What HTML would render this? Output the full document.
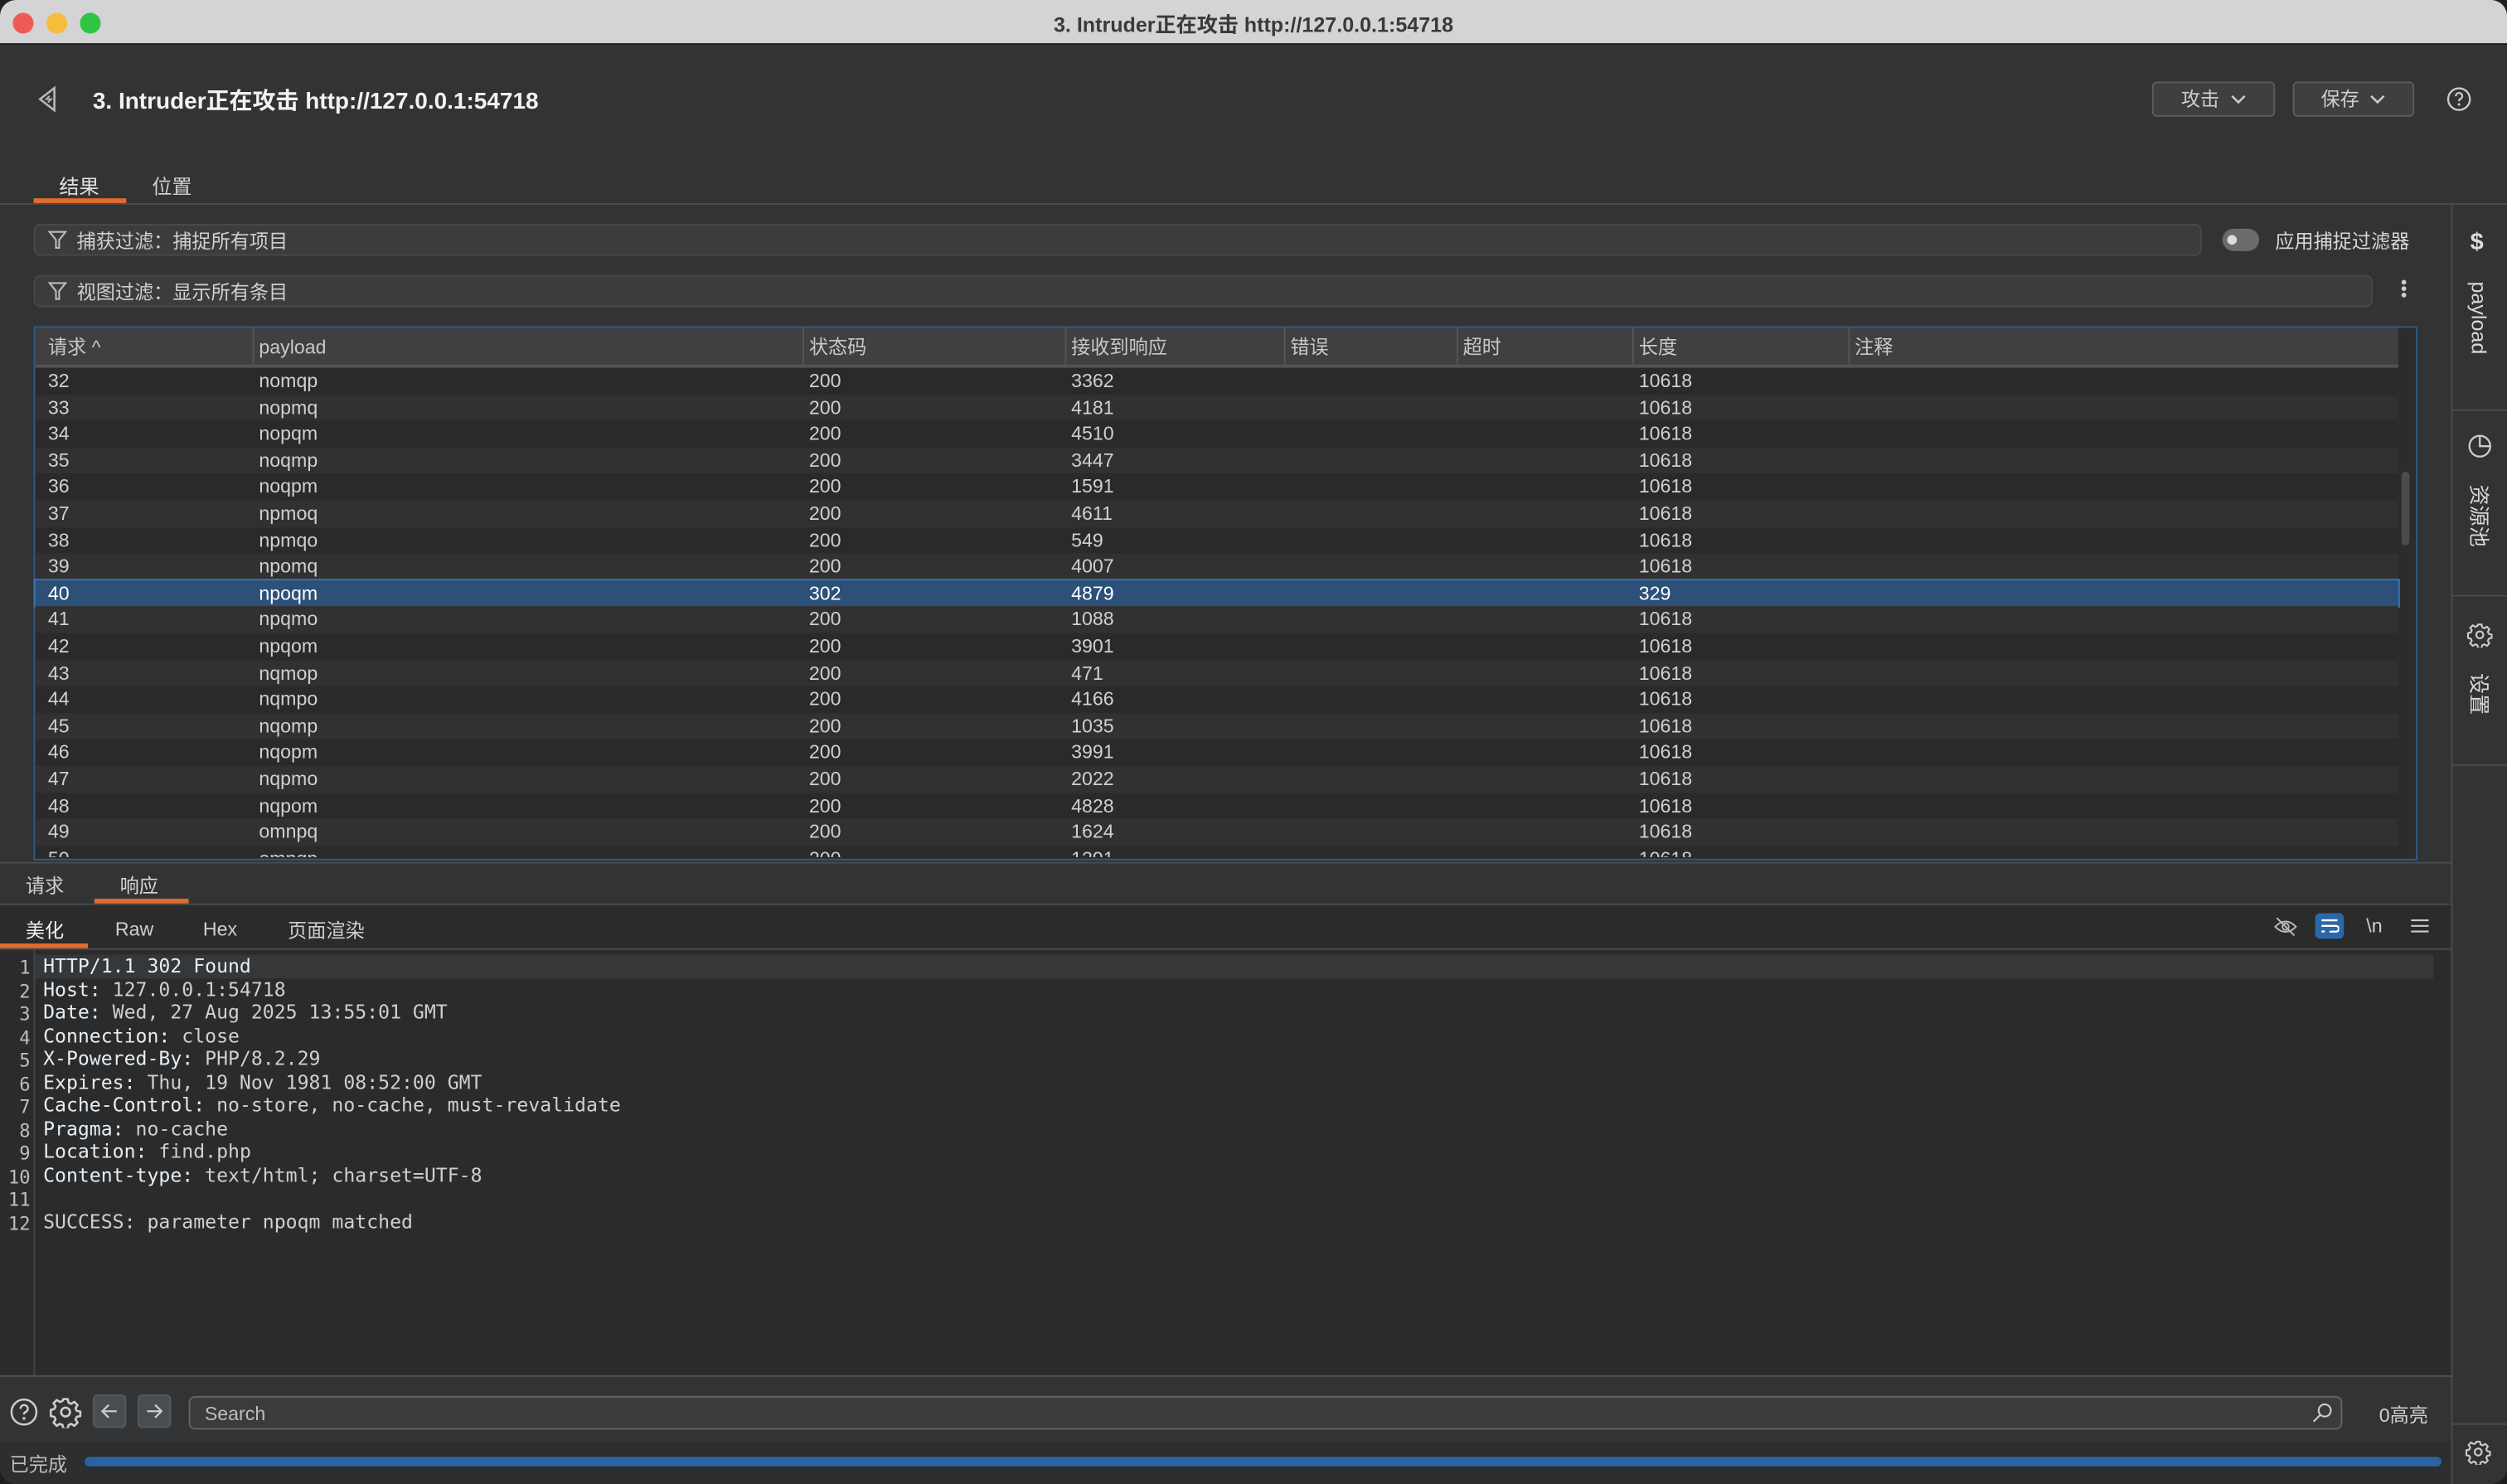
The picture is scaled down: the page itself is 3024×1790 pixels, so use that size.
<!DOCTYPE html>
<html><head><meta charset="utf-8"><style>
*{margin:0;padding:0;box-sizing:border-box}
html,body{width:3024px;height:1790px;overflow:hidden;background:#1e1e1e}
#s{position:absolute;left:0;top:0;width:1568px;height:928px;transform:scale(1.92857,1.92888);transform-origin:0 0;background:#323335;font-family:"Liberation Sans","Noto Sans CJK SC",sans-serif;color:#d4d4d4;font-size:12px;border-radius:10px;overflow:hidden}
.a{position:absolute;white-space:nowrap}
.mono{font-family:"DejaVu Sans Mono","Liberation Mono",monospace}
.row{position:absolute;left:22px;width:1478px;height:16.6px;font-size:12px;line-height:16.6px;color:#d0d0d0}
.row span{position:absolute;top:0}
.hd{position:absolute;top:204px;height:26px;line-height:26px;font-size:12px;color:#c8c8c8;border-left:1px solid #555}
.btn{position:absolute;top:51px;height:22px;border:1px solid #5a5c5e;background:#3d3f41;border-radius:3px;font-size:12px;line-height:20px;color:#cfcfcf;text-align:center}
.code{position:absolute;left:27px;font-size:12px;line-height:14.5px;color:#cfcfcf}
.code b{font-weight:normal;color:#e4eef7}
.ln{position:absolute;width:19px;text-align:right;font-size:11.5px;line-height:14.5px;color:#bdbdbd}
.vt{writing-mode:vertical-rl;text-orientation:sideways;font-size:13px;color:#d8d8d8}
</style></head><body><div id="s">
<svg width="0" height="0" style="position:absolute"><defs><g id="gear"><circle cx="8" cy="8" r="2.2" fill="none" stroke="#ccc" stroke-width="1.1"/><path d="M6.9 1.5h2.2l.4 1.8 1.3.6 1.6-1 1.6 1.6-1 1.6.6 1.3 1.8.4v2.2l-1.8.4-.6 1.3 1 1.6-1.6 1.6-1.6-1-1.3.6-.4 1.8H6.9l-.4-1.8-1.3-.6-1.6 1-1.6-1.6 1-1.6-.6-1.3-1.8-.4V6.9l1.8-.4.6-1.3-1-1.6 1.6-1.6 1.6 1 1.3-.6z" fill="none" stroke="#ccc" stroke-width="1.1" stroke-linejoin="round"/></g></defs></svg>
<!-- titlebar -->
<div class="a" style="left:0;top:0;width:1568px;height:28px;background:#d4d4d6;border-bottom:1px solid #222"></div>
<div class="a" style="left:8px;top:8px;width:13px;height:13px;border-radius:50%;background:#ee5b57"></div>
<div class="a" style="left:29px;top:8px;width:13px;height:13px;border-radius:50%;background:#f5bd3a"></div>
<div class="a" style="left:50px;top:8px;width:13px;height:13px;border-radius:50%;background:#2fc544"></div>
<div class="a" style="left:0;top:5px;width:1568px;text-align:center;font-size:13px;font-weight:bold;color:#3a3a3a">3. Intruder正在攻击 http://127.0.0.1:54718</div>
<!-- header -->
<svg class="a" style="left:22px;top:53px" width="16" height="18" viewBox="0 0 16 18"><path d="M12 2 L3 9 L12 16 Z" fill="none" stroke="#bbb" stroke-width="1.3"/><path d="M9 7 L7 9 L10 9 L8 11" fill="none" stroke="#bbb" stroke-width="1"/></svg>
<div class="a" style="left:58px;top:52px;font-size:14.5px;font-weight:bold;color:#f2f2f2">3. Intruder正在攻击 http://127.0.0.1:54718</div>
<div class="btn" style="left:1346px;width:77px">攻击 &nbsp;<svg width="10" height="8" viewBox="0 0 10 8"><path d="M1 2 L5 6 L9 2" fill="none" stroke="#ccc" stroke-width="1.3"/></svg></div>
<div class="btn" style="left:1434px;width:76px">保存 &nbsp;<svg width="10" height="8" viewBox="0 0 10 8"><path d="M1 2 L5 6 L9 2" fill="none" stroke="#ccc" stroke-width="1.3"/></svg></div>
<svg class="a" style="left:1530px;top:54px" width="16" height="16" viewBox="0 0 16 16"><circle cx="8" cy="8" r="6.8" fill="none" stroke="#ccc" stroke-width="1.2"/><path d="M6 6.2a2 2 0 1 1 2.7 1.8c-.6.3-.7.6-.7 1.3" fill="none" stroke="#ccc" stroke-width="1.2"/><circle cx="8" cy="11.3" r=".8" fill="#ccc"/></svg>
<!-- tabs -->
<div class="a" style="left:37px;top:106px;font-size:12.5px;color:#e0e0e0">结果</div>
<div class="a" style="left:95px;top:106px;font-size:12.5px;color:#cfcfcf">位置</div>
<div class="a" style="left:21px;top:124px;width:58px;height:3px;background:#e06a2c"></div>
<div class="a" style="left:0;top:127px;width:1568px;height:1px;background:#4a4b4d"></div>
<!-- sidebar -->
<div class="a" style="left:1533px;top:128px;width:1px;height:800px;background:#4a4b4d"></div>
<div class="a" style="left:1534px;top:256px;width:34px;height:1px;background:#4a4b4d"></div>
<div class="a" style="left:1534px;top:372px;width:34px;height:1px;background:#4a4b4d"></div>
<div class="a" style="left:1534px;top:478px;width:34px;height:1px;background:#4a4b4d"></div>
<div class="a" style="left:1534px;top:890px;width:34px;height:1px;background:#4a4b4d"></div>
<div class="a" style="left:1545px;top:143px;font-size:15px;font-weight:bold;color:#ddd">$</div>
<div class="a vt" style="left:1543px;top:176px">payload</div>
<svg class="a" style="left:1543px;top:271px" width="16" height="16" viewBox="0 0 16 16"><circle cx="8" cy="8" r="6.5" fill="none" stroke="#ccc" stroke-width="1.2"/><path d="M8 2 V8 H14" fill="none" stroke="#ccc" stroke-width="1.2"/></svg>
<div class="a vt" style="left:1542px;top:303px">资源池</div>
<svg class="a" style="left:1543px;top:389px" width="16" height="16" viewBox="0 0 16 16"><use href="#gear"/></svg>
<div class="a vt" style="left:1542px;top:421px">设置</div>
<svg class="a" style="left:1542px;top:900px" width="16" height="16" viewBox="0 0 16 16"><use href="#gear"/></svg>
<!-- filters -->
<div class="a" style="left:21px;top:140px;width:1356px;height:20px;background:#3c3c3e;border:1px solid #47484a;border-radius:4px"></div>
<div class="a" style="left:21px;top:172px;width:1463px;height:20px;background:#3c3c3e;border:1px solid #47484a;border-radius:4px"></div>
<svg class="a" style="left:30px;top:143px" width="12" height="14" viewBox="0 0 12 14"><path d="M1 2 H11 L7 7 V12 L5 12 V7 Z" fill="none" stroke="#bbb" stroke-width="1.1"/></svg>
<svg class="a" style="left:30px;top:175px" width="12" height="14" viewBox="0 0 12 14"><path d="M1 2 H11 L7 7 V12 L5 12 V7 Z" fill="none" stroke="#bbb" stroke-width="1.1"/></svg>
<div class="a" style="left:48px;top:142px;font-size:12px;color:#d0d0d0">捕获过滤：捕捉所有项目</div>
<div class="a" style="left:48px;top:174px;font-size:12px;color:#d0d0d0">视图过滤：显示所有条目</div>
<div class="a" style="left:1390px;top:143px;width:23px;height:14px;border-radius:7px;background:#6b6b6d"></div>
<div class="a" style="left:1393px;top:147px;width:6px;height:6px;border-radius:50%;background:#ddd"></div>
<div class="a" style="left:1423px;top:142px;font-size:12px;color:#d8d8d8">应用捕捉过滤器</div>
<div class="a" style="left:1502px;top:175px;width:3px;height:3px;border-radius:50%;background:#ccc;box-shadow:0 4px 0 #ccc,0 8px 0 #ccc"></div>
<!-- table -->
<div class="a" style="left:21px;top:204px;width:1491px;height:334px;border:1px solid #2f5b85;background:#2c2c2c"></div>
<div class="a" style="left:22px;top:205px;width:1478px;height:25px;background:#404042;border-bottom:2px solid #555"></div>
<div class="hd" style="left:22px;border:none;padding-left:8px">请求 ^</div>
<div class="hd" style="left:158px;padding-left:3px">payload</div>
<div class="hd" style="left:502px;padding-left:3px">状态码</div>
<div class="hd" style="left:666px;padding-left:3px">接收到响应</div>
<div class="hd" style="left:803px;padding-left:3px">错误</div>
<div class="hd" style="left:911px;padding-left:3px">超时</div>
<div class="hd" style="left:1021px;padding-left:3px">长度</div>
<div class="hd" style="left:1156px;padding-left:3px">注释</div>
<div class="a" style="left:1502px;top:295px;width:5px;height:46px;border-radius:3px;background:#4a4b4d"></div>
<div id="rows"></div>
<!-- lower -->
<div class="a" style="left:0;top:539px;width:1533px;height:1px;background:#4a4b4d"></div>
<div class="a" style="left:16px;top:545px;font-size:12px;color:#cfcfcf">请求</div>
<div class="a" style="left:75px;top:545px;font-size:12px;color:#d8d8d8">响应</div>
<div class="a" style="left:59px;top:562px;width:59px;height:3px;background:#e06a2c"></div>
<div class="a" style="left:0;top:565px;width:1533px;height:1px;background:#4a4b4d"></div>
<div class="a" style="left:0;top:566px;width:1533px;height:294px;background:#2b2b2b"></div>
<div class="a" style="left:16px;top:573px;font-size:12px;color:#f0f0f0">美化</div>
<div class="a" style="left:72px;top:574px;font-size:12px;color:#cfcfcf">Raw</div>
<div class="a" style="left:127px;top:574px;font-size:12px;color:#cfcfcf">Hex</div>
<div class="a" style="left:180px;top:573px;font-size:12px;color:#cfcfcf">页面渲染</div>
<div class="a" style="left:0;top:590px;width:55px;height:3px;background:#e06a2c"></div>
<div class="a" style="left:0;top:593px;width:1533px;height:1px;background:#4a4b4d"></div>
<svg class="a" style="left:1422px;top:573px" width="15" height="13" viewBox="0 0 15 13"><path d="M1 6.5 Q7.5 0 14 6.5 Q7.5 13 1 6.5Z" fill="none" stroke="#bbb" stroke-width="1"/><circle cx="7.5" cy="6.5" r="2" fill="none" stroke="#bbb"/><path d="M2 1 L13 12" stroke="#bbb" stroke-width="1"/></svg>
<div class="a" style="left:1448px;top:571px;width:18px;height:16px;border-radius:3px;background:#2b68a8"></div>
<svg class="a" style="left:1451px;top:574px" width="12" height="10" viewBox="0 0 12 10"><path d="M1 1.5H11 M1 5H10a1.8 1.8 0 0 1 0 3.6H6 M1 8.5H3" fill="none" stroke="#fff" stroke-width="1.2"/></svg>
<div class="a" style="left:1480px;top:572px;font-size:12px;color:#cfcfcf">\n</div>
<svg class="a" style="left:1508px;top:574px" width="11" height="10" viewBox="0 0 11 10"><path d="M0 1.5H11M0 5H11M0 8.5H11" stroke="#ccc" stroke-width="1.1"/></svg>
<div class="a" style="left:21px;top:594px;width:1px;height:266px;background:#444"></div>
<div class="a" style="left:22px;top:597px;width:1500px;height:15px;background:#353738"></div>
<div id="code"></div>
<div class="a" style="left:0;top:860px;width:1533px;height:1px;background:#555"></div>
<!-- toolbar -->
<svg class="a" style="left:6px;top:874px" width="18" height="18" viewBox="0 0 18 18"><circle cx="9" cy="9" r="7.8" fill="none" stroke="#ccc" stroke-width="1.3"/><path d="M6.8 7a2.3 2.3 0 1 1 3 2.1c-.6.3-.8.7-.8 1.4" fill="none" stroke="#ccc" stroke-width="1.3"/><circle cx="9" cy="13" r=".9" fill="#ccc"/></svg>
<svg class="a" style="left:31px;top:873px" width="20" height="20" viewBox="0 0 16 16"><use href="#gear"/></svg>
<div class="a" style="left:58px;top:872px;width:21px;height:21px;border-radius:3px;background:#4a4d50;border:1px solid #56595c"></div>
<div class="a" style="left:86px;top:872px;width:21px;height:21px;border-radius:3px;background:#4a4d50;border:1px solid #56595c"></div>
<svg class="a" style="left:62px;top:876px" width="13" height="13" viewBox="0 0 13 13"><path d="M11 6.5H2 M6 2.5L2 6.5L6 10.5" fill="none" stroke="#ccc" stroke-width="1.2"/></svg>
<svg class="a" style="left:90px;top:876px" width="13" height="13" viewBox="0 0 13 13"><path d="M2 6.5H11 M7 2.5L11 6.5L7 10.5" fill="none" stroke="#ccc" stroke-width="1.2"/></svg>
<div class="a" style="left:118px;top:873px;width:1347px;height:21px;border-radius:4px;background:#3b3b3d;border:1px solid #626365"></div>
<div class="a" style="left:128px;top:877px;font-size:12px;color:#bdbdbd">Search</div>
<svg class="a" style="left:1446px;top:877px" width="13" height="13" viewBox="0 0 13 13"><circle cx="8" cy="5" r="3.8" fill="none" stroke="#ccc" stroke-width="1.1"/><path d="M5.3 7.7L1 12" stroke="#ccc" stroke-width="1.1"/></svg>
<div class="a" style="left:1488px;top:876px;font-size:12px;color:#d0d0d0">0高亮</div>
<!-- status -->
<div class="a" style="left:0;top:902px;width:1533px;height:26px;background:#2d2e30"></div>
<div class="a" style="left:6px;top:907px;font-size:12px;color:#bdbdbd">已完成</div>
<div class="a" style="left:53px;top:911px;width:1474px;height:6px;border-radius:3px;background:#2a64a0"></div>
</div>
<script>
var d=[[32,"nomqp",200,3362],[33,"nopmq",200,4181],[34,"nopqm",200,4510],[35,"noqmp",200,3447],[36,"noqpm",200,1591],[37,"npmoq",200,4611],[38,"npmqo",200,549],[39,"npomq",200,4007],[40,"npoqm",302,4879],[41,"npqmo",200,1088],[42,"npqom",200,3901],[43,"nqmop",200,471],[44,"nqmpo",200,4166],[45,"nqomp",200,1035],[46,"nqopm",200,3991],[47,"nqpmo",200,2022],[48,"nqpom",200,4828],[49,"omnpq",200,1624],[50,"omnqp",200,1291]];
var h="";d.forEach(function(r,i){var y=230.5+i*16.6,sel=r[0]==40;var bg=sel?"#2c5078":(i%2?"#313131":"#2a2a2a");var hh=i==18?(537-y):16.6;h+='<div class="row" style="top:'+(y-0.5)+'px;height:'+hh+'px;overflow:hidden;background:'+bg+(sel?';outline:1px solid #3a77b8;color:#fff':'')+'"><span style="left:8px">'+r[0]+'</span><span style="left:140px">'+r[1]+'</span><span style="left:484px">'+r[2]+'</span><span style="left:648px">'+r[3]+'</span><span style="left:1003px">'+(sel?329:10618)+'</span></div>';});
document.getElementById("rows").innerHTML=h;
var c=[["HTTP/1.1 302 Found",""],["Host:"," 127.0.0.1:54718"],["Date:"," Wed, 27 Aug 2025 13:55:01 GMT"],["Connection:"," close"],["X-Powered-By:"," PHP/8.2.29"],["Expires:"," Thu, 19 Nov 1981 08:52:00 GMT"],["Cache-Control:"," no-store, no-cache, must-revalidate"],["Pragma:"," no-cache"],["Location:"," find.php"],["Content-type:"," text/html; charset=UTF-8"],["",""],["","SUCCESS: parameter npoqm matched"]];
var s="";c.forEach(function(l,i){var y=597+i*14.5;s+='<div class="ln mono" style="left:0;top:'+(y+1)+'px">'+(i+1)+'</div><div class="code mono" style="top:'+y+'px"><b>'+l[0]+'</b>'+l[1]+'</div>';});
document.getElementById("code").innerHTML=s;
</script>
</body></html>
